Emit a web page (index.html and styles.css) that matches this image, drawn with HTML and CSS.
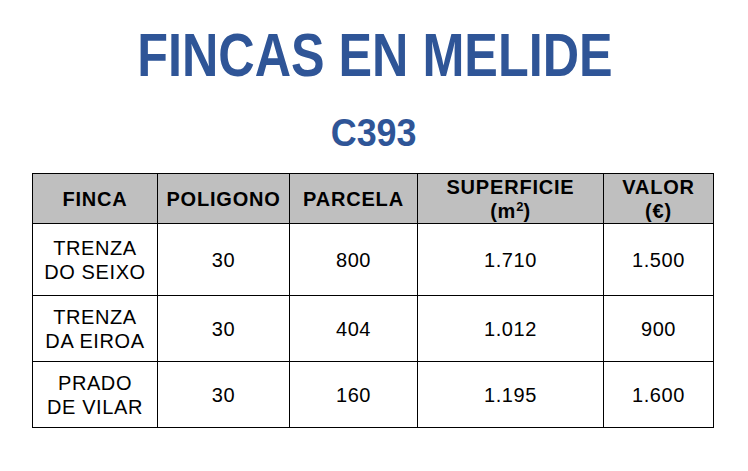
FILE: index.html
```html
<!DOCTYPE html>
<html lang="gl">
<head>
<meta charset="utf-8">
<title>Fincas en Melide</title>
<link rel="stylesheet" href="styles.css">
</head>
<body>
<main class="page">
  <h1 class="title">FINCAS EN MELIDE</h1>
  <h2 class="code">C393</h2>
  <table class="grid">
    <colgroup>
      <col class="c-finca">
      <col class="c-pol">
      <col class="c-par">
      <col class="c-sup">
      <col class="c-val">
    </colgroup>
    <thead>
      <tr class="head">
        <th>FINCA</th>
        <th>POLIGONO</th>
        <th>PARCELA</th>
        <th>SUPERFICIE<br>(m<sup class="sq">2</sup>)</th>
        <th>VALOR<br>(€)</th>
      </tr>
    </thead>
    <tbody>
      <tr class="row-tall">
        <td>TRENZA<br>DO SEIXO</td>
        <td>30</td>
        <td>800</td>
        <td>1.710</td>
        <td>1.500</td>
      </tr>
      <tr class="row">
        <td>TRENZA<br>DA EIROA</td>
        <td>30</td>
        <td>404</td>
        <td>1.012</td>
        <td>900</td>
      </tr>
      <tr class="row">
        <td>PRADO<br>DE VILAR</td>
        <td>30</td>
        <td>160</td>
        <td>1.195</td>
        <td>1.600</td>
      </tr>
    </tbody>
  </table>
</main>
</body>
</html>
```
FILE: styles.css
```css
html, body {
  margin: 0;
  padding: 0;
  background: #ffffff;
}

.page {
  width: 748px;
  display: flex;
  flex-direction: column;
  align-items: center;
}

.title {
  margin: 25px 0 0 0;
  font-family: "Liberation Sans", Arial, sans-serif;
  font-weight: 700;
  font-size: 61px;
  line-height: 61px;
  color: #2f5597;
  white-space: nowrap;
  transform: scaleX(0.825);
  padding-left: 2px;
}

.code {
  margin: 27px 0 0 0;
  font-family: "Liberation Sans", Arial, sans-serif;
  font-weight: 700;
  font-size: 39px;
  line-height: 39px;
  color: #2f5597;
  transform: scaleX(0.92);
}

.grid {
  margin: 21px 0 0 32px;
  align-self: flex-start;
  border-collapse: collapse;
  table-layout: fixed;
  width: 682px;
  font-family: "Liberation Sans", Arial, sans-serif;
  font-size: 20px;
  line-height: 24px;
  letter-spacing: 0.6px;
  color: #000;
}

.c-finca { width: 125px; }
.c-pol { width: 132px; }
.c-par { width: 128px; }
.c-sup { width: 186px; }
.c-val { width: 110px; }

.grid th,
.grid td {
  border: 1px solid #000;
  padding: 0;
  text-align: center;
  vertical-align: middle;
}

.grid th {
  background: #bfbfbf;
  font-weight: 700;
  letter-spacing: 0.8px;
}

.head { height: 50px; }
.row-tall { height: 72px; }
.row { height: 66px; }

.sq {
  font-size: 13px;
  line-height: 0;
  vertical-align: 7px;
  letter-spacing: 0;
}
```
